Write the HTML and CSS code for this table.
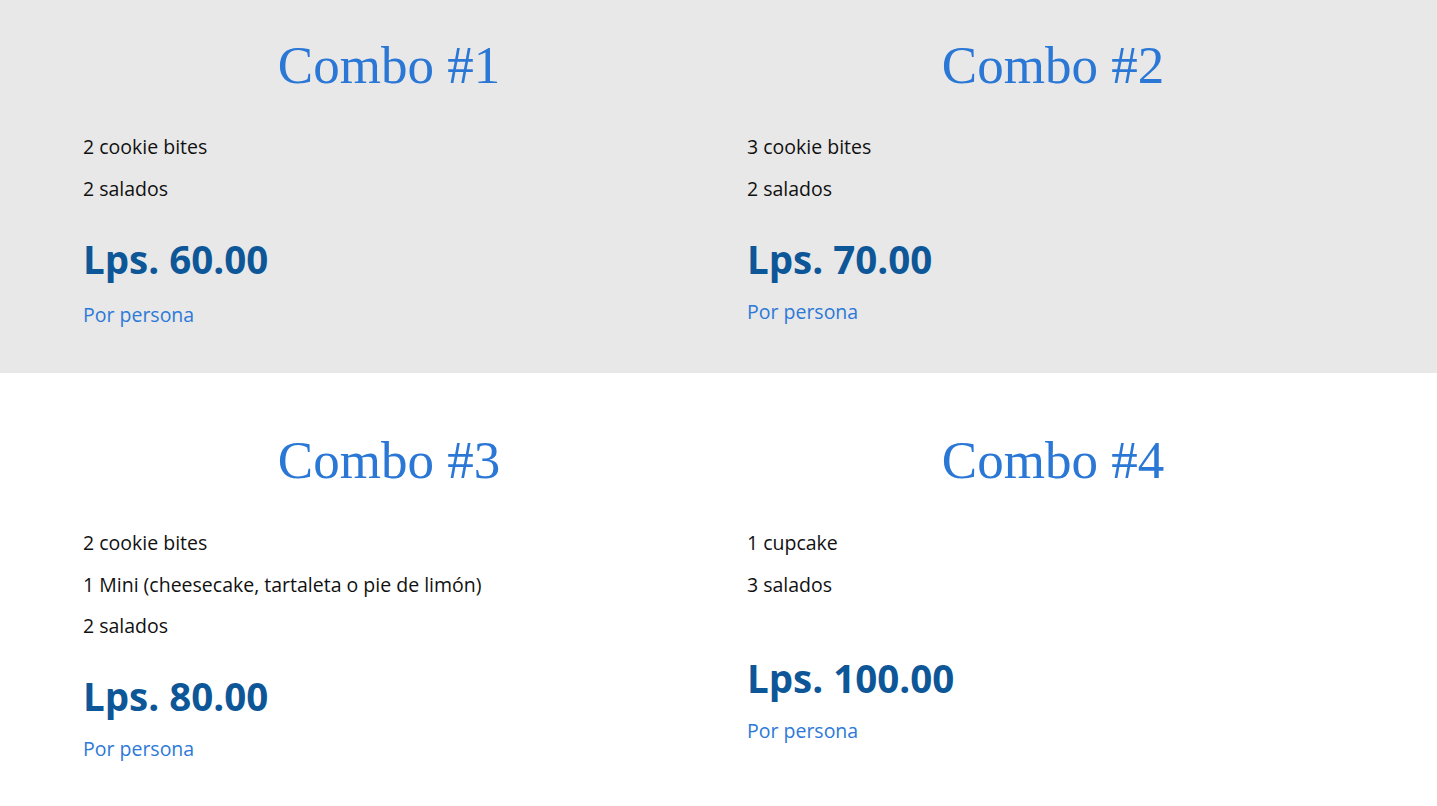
FILE: index.html
```html
<!DOCTYPE html>
<html lang="es">
<head>
<meta charset="utf-8">
<title>Combos</title>
<link rel="stylesheet" href="styles.css">
</head>
<body>
<section class="band band-grey">
  <div class="grid">
    <div class="card">
      <h2 class="title">Combo #1</h2>
      <p class="item">2 cookie bites</p>
      <p class="item">2 salados</p>
      <p class="price">Lps. 60.00</p>
      <p class="per per-wide">Por persona</p>
    </div>
    <div class="card">
      <h2 class="title">Combo #2</h2>
      <p class="item">3 cookie bites</p>
      <p class="item">2 salados</p>
      <p class="price">Lps. 70.00</p>
      <p class="per">Por persona</p>
    </div>
  </div>
</section>
<section class="band band-white">
  <div class="grid">
    <div class="card">
      <h2 class="title">Combo #3</h2>
      <p class="item">2 cookie bites</p>
      <p class="item">1 Mini (cheesecake, tartaleta o pie de limón)</p>
      <p class="item">2 salados</p>
      <p class="price">Lps. 80.00</p>
      <p class="per">Por persona</p>
    </div>
    <div class="card">
      <h2 class="title">Combo #4</h2>
      <p class="item">1 cupcake</p>
      <p class="item">3 salados</p>
      <p class="price price-gap">Lps. 100.00</p>
      <p class="per">Por persona</p>
    </div>
  </div>
</section>
</body>
</html>
```
FILE: styles.css
```css
html, body {
  margin: 0;
  padding: 0;
  background: #ffffff;
}
body {
  font-family: "Open Sans", "Liberation Sans", sans-serif;
  color: #111111;
}
.band-grey {
  background: #e8e8e8;
  padding: 33px 0 43px;
}
.band-white {
  background: #ffffff;
  padding: 55px 0 40px;
}
.grid {
  display: grid;
  grid-template-columns: 612px 612px;
  column-gap: 52px;
  padding-left: 83px;
}
.card {
  display: flex;
  flex-direction: column;
}
.card p {
  margin: 0;
}
.title {
  margin: 0 0 35px;
  font-family: "Liberation Serif", "Times New Roman", serif;
  font-weight: 400;
  font-size: 53px;
  line-height: 64px;
  color: #2a77d5;
  text-align: center;
}
.band-white .title {
  margin-bottom: 36px;
}
.item {
  font-size: 19.5px;
  line-height: 30px;
}
.card .item + .item {
  margin-top: 12px;
}
.band-white .card .item + .item {
  margin-top: 11.5px;
}
.price {
  font-size: 38.5px;
  line-height: 48px;
  font-weight: 700;
  color: #0d5697;
}
.card .price {
  margin-top: 31px;
}
.card .price-gap {
  margin-top: 54px;
}
.per {
  font-size: 19.5px;
  line-height: 30px;
  color: #2c79d8;
}
.card .per {
  margin-top: 14px;
}
.card .per-wide {
  margin-top: 17px;
}
```
